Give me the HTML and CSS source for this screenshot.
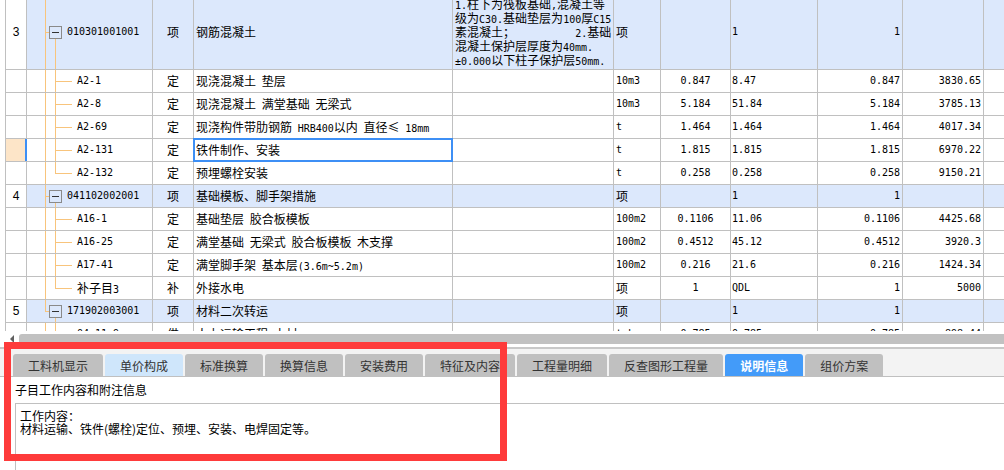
FILE: index.html
```html
<!DOCTYPE html>
<html lang="zh-CN">
    <head>
        <meta charset="UTF-8">
        <title>分部分项工程 - 说明信息</title>
        <link rel="stylesheet" href="styles.css">
    </head>
    <body>
        <div class="grid">
            <div class="rows">
                <div class="row bill tall">
                    <div class="no">3</div>
                    <div class="code head"><i class="fold"></i><span class="n">010301001001</span></div>
                    <div class="type">项</div>
                    <div class="name">钢筋混凝土</div>
                    <div class="feat"><p><span class="n">1.</span>柱下为筏板基础<span class="n">,</span>混凝土等<br>级为<span class="n">C30.</span>基础垫层为<span class="n">100</span>厚<span class="n">C15</span><br>素混凝土；<span class="n">          2.</span>基础<br>混凝土保护层厚度为<span class="n">40mm.</span><br><span class="n">±0.000</span>以下柱子保护层<span class="n">50mm.</span></p></div>
                    <div class="unit">项</div>
                    <div class="hl n"></div>
                    <div class="expr n">1</div>
                    <div class="qty n">1</div>
                    <div class="price n"></div>
                    <div></div>
                </div>
                <div class="row">
                    <div class="no"></div>
                    <div class="code kid n">A2-1</div>
                    <div class="type">定</div>
                    <div class="name">现浇混凝土 垫层</div>
                    <div class="feat"></div>
                    <div class="unit n">10m3</div>
                    <div class="hl n">0.847</div>
                    <div class="expr n">8.47</div>
                    <div class="qty n">0.847</div>
                    <div class="price n">3830.65</div>
                    <div></div>
                </div>
                <div class="row">
                    <div class="no"></div>
                    <div class="code kid n">A2-8</div>
                    <div class="type">定</div>
                    <div class="name">现浇混凝土 满堂基础 无梁式</div>
                    <div class="feat"></div>
                    <div class="unit n">10m3</div>
                    <div class="hl n">5.184</div>
                    <div class="expr n">51.84</div>
                    <div class="qty n">5.184</div>
                    <div class="price n">3785.13</div>
                    <div></div>
                </div>
                <div class="row">
                    <div class="no"></div>
                    <div class="code kid n">A2-69</div>
                    <div class="type">定</div>
                    <div class="name"><p>现浇构件带肋钢筋 <span class="n">HRB400</span>以内 直径≤ <span class="n">18mm</span></p></div>
                    <div class="feat"></div>
                    <div class="unit n">t</div>
                    <div class="hl n">1.464</div>
                    <div class="expr n">1.464</div>
                    <div class="qty n">1.464</div>
                    <div class="price n">4017.34</div>
                    <div></div>
                </div>
                <div class="row">
                    <div class="no cur"></div>
                    <div class="code kid n">A2-131</div>
                    <div class="type">定</div>
                    <div class="name sel">铁件制作、安装</div>
                    <div class="feat"></div>
                    <div class="unit n">t</div>
                    <div class="hl n">1.815</div>
                    <div class="expr n">1.815</div>
                    <div class="qty n">1.815</div>
                    <div class="price n">6970.22</div>
                    <div></div>
                </div>
                <div class="row">
                    <div class="no"></div>
                    <div class="code kid last n">A2-132</div>
                    <div class="type">定</div>
                    <div class="name">预埋螺栓安装</div>
                    <div class="feat"></div>
                    <div class="unit n">t</div>
                    <div class="hl n">0.258</div>
                    <div class="expr n">0.258</div>
                    <div class="qty n">0.258</div>
                    <div class="price n">9150.21</div>
                    <div></div>
                </div>
                <div class="row bill">
                    <div class="no">4</div>
                    <div class="code head"><i class="fold"></i><span class="n">041102002001</span></div>
                    <div class="type">项</div>
                    <div class="name">基础模板、脚手架措施</div>
                    <div class="feat"></div>
                    <div class="unit">项</div>
                    <div class="hl n"></div>
                    <div class="expr n">1</div>
                    <div class="qty n">1</div>
                    <div class="price n"></div>
                    <div></div>
                </div>
                <div class="row">
                    <div class="no"></div>
                    <div class="code kid n">A16-1</div>
                    <div class="type">定</div>
                    <div class="name">基础垫层 胶合板模板</div>
                    <div class="feat"></div>
                    <div class="unit n">100m2</div>
                    <div class="hl n">0.1106</div>
                    <div class="expr n">11.06</div>
                    <div class="qty n">0.1106</div>
                    <div class="price n">4425.68</div>
                    <div></div>
                </div>
                <div class="row">
                    <div class="no"></div>
                    <div class="code kid n">A16-25</div>
                    <div class="type">定</div>
                    <div class="name">满堂基础 无梁式 胶合板模板 木支撑</div>
                    <div class="feat"></div>
                    <div class="unit n">100m2</div>
                    <div class="hl n">0.4512</div>
                    <div class="expr n">45.12</div>
                    <div class="qty n">0.4512</div>
                    <div class="price n">3920.3</div>
                    <div></div>
                </div>
                <div class="row">
                    <div class="no"></div>
                    <div class="code kid n">A17-41</div>
                    <div class="type">定</div>
                    <div class="name"><p>满堂脚手架 基本层<span class="n">(3.6m~5.2m)</span></p></div>
                    <div class="feat"></div>
                    <div class="unit n">100m2</div>
                    <div class="hl n">0.216</div>
                    <div class="expr n">21.6</div>
                    <div class="qty n">0.216</div>
                    <div class="price n">1424.34</div>
                    <div></div>
                </div>
                <div class="row">
                    <div class="no"></div>
                    <div class="code kid last"><p>补子目<span class="n">3</span></p></div>
                    <div class="type">补</div>
                    <div class="name">外接水电</div>
                    <div class="feat"></div>
                    <div class="unit">项</div>
                    <div class="hl n">1</div>
                    <div class="expr n">QDL</div>
                    <div class="qty n">1</div>
                    <div class="price n">5000</div>
                    <div></div>
                </div>
                <div class="row bill">
                    <div class="no">5</div>
                    <div class="code head end"><i class="fold"></i><span class="n">171902003001</span></div>
                    <div class="type">项</div>
                    <div class="name">材料二次转运</div>
                    <div class="feat"></div>
                    <div class="unit">项</div>
                    <div class="hl n"></div>
                    <div class="expr n">1</div>
                    <div class="qty n">1</div>
                    <div class="price n"></div>
                    <div></div>
                </div>
                <div class="row">
                    <div class="no"></div>
                    <div class="code kid n">04-11-9</div>
                    <div class="type">借</div>
                    <div class="name">人力运输工程 木材</div>
                    <div class="feat"></div>
                    <div class="unit n">t.km</div>
                    <div class="hl n">0.785</div>
                    <div class="expr n">0.785</div>
                    <div class="qty n">0.785</div>
                    <div class="price n">898.44</div>
                    <div></div>
                </div>
            </div>
        </div>

        <div class="hscroll">
            <i class="arrow"></i>
            <div class="thumb"></div>
        </div>

        <div class="tabs">
            <div class="tab">工料机显示</div>
            <div class="tab soft">单价构成</div>
            <div class="tab">标准换算</div>
            <div class="tab">换算信息</div>
            <div class="tab">安装费用</div>
            <div class="tab">特征及内容</div>
            <div class="tab">工程量明细</div>
            <div class="tab">反查图形工程量</div>
            <div class="tab on">说明信息</div>
            <div class="tab">组价方案</div>
        </div>

        <div class="note-title">子目工作内容和附注信息</div>
        <div class="note">
            工作内容：<br>
            材料运输、铁件(螺栓)定位、预埋、安装、电焊固定等。
        </div>

        <div class="mark"></div>
    </body>
</html>
```
FILE: styles.css
```css
/* 清单编辑表格 + 下方属性页签 */

body{
    margin: 0;
    width: 1004px;
    height: 470px;
    overflow: hidden;
    position: relative;
    background-color: #fff;
    color: #000;
    font-family: "Noto Sans CJK SC", sans-serif;
    font-size: 12px;
}

p{
    margin: 0;
}

/* ---------- 表格 ---------- */

.grid{
    height: 331px;
    overflow: hidden;
}

.rows{
    margin: -5px 0 0 5px;
    border-left: 1px solid #c0c0c0;
}

.row{
    display: grid;
    grid-template-columns: 21px 126px 41px 259px 161px 47px 70px 87px 85px 81px 1fr;
    height: 23px;
    box-sizing: border-box;
    border-bottom: 1px solid #c0c0c0;
}

.row.tall{
    height: 75px;
}

.row > div{
    display: flex;
    align-items: center;
    border-right: 1px solid #c0c0c0;
    line-height: 14px;
    white-space: nowrap;
    overflow: hidden;
    word-spacing: 3px;
}

.row > div:last-child{
    border-right: 0;
}

.bill{
    background-color: #dce8fc;
}

.n{
    font-family: "DejaVu Sans Mono", monospace;
    font-size: 10px;
    line-height: 10px;
    word-spacing: 0;
    white-space: pre;
}

.row > .no{
    justify-content: center;
    background-color: #fff;
    font-family: "Liberation Sans", sans-serif;
    font-size: 12px;
}

.row > .cur{
    background-color: #fde5c8;
    border-right-color: #3d8ff5;
    box-shadow: inset -1px 0 #3d8ff5;
}

.row > .type, .row > .hl{
    justify-content: center;
}

.row > .name, .row > .feat, .row > .unit{
    padding-left: 2px;
}

.row > .expr{
    padding-left: 1px;
}

.row > .qty, .row > .price{
    justify-content: flex-end;
    padding-right: 2px;
}

/* 当前选中单元格 */
.row > .sel{
    position: relative;
    overflow: visible;
}

.sel::after{
    content: "";
    position: absolute;
    left: -1px;
    top: -1px;
    right: -1px;
    bottom: -1px;
    border: 2px solid #3d8ff5;
}

/* 树形连线 */
.code{
    background-repeat: no-repeat;
    background-image:
        linear-gradient(#f8c47c, #f8c47c),
        linear-gradient(#f8c47c, #f8c47c),
        linear-gradient(#f8c47c, #f8c47c);
}

.row > .kid{
    padding-left: 50px;
    background-position: 18px 0, 28px 0, 28px 50%;
    background-size: 1px 100%, 1px 100%, 17px 1px;
}

.row > .kid.last{
    background-size: 1px 100%, 1px 50%, 17px 1px;
}

.row > .head{
    padding-left: 22px;
    background-position: 18px 0, 28px 100%, 18px 50%;
    background-size: 1px 100%, 1px calc(50% - 6px), 4px 1px;
}

.row > .head.end{
    background-size: 1px 50%, 1px calc(50% - 6px), 4px 1px;
}

.fold{
    position: relative;
    flex: none;
    width: 11px;
    height: 11px;
    border: 1px solid #8a8a8a;
    margin-right: 5px;
}

.fold::after{
    content: "";
    position: absolute;
    left: 2px;
    right: 2px;
    top: 5px;
    height: 1px;
    background-color: #333;
}

/* ---------- 横向滚动条 ---------- */

.hscroll{
    height: 16px;
    border-bottom: 2px solid #c8c8c8;
    display: flex;
    align-items: center;
    padding-left: 10px;
}

.arrow{
    width: 0;
    height: 0;
    border-right: 4px solid #606060;
    border-top: 4px solid transparent;
    border-bottom: 4px solid transparent;
    margin-right: 5px;
}

.thumb{
    flex: 1;
    height: 10px;
    background-color: #c1c1c1;
    border-radius: 3px 0 0 3px;
}

/* ---------- 页签 ---------- */

.tabs{
    display: flex;
    gap: 2px;
    height: 28px;
    box-sizing: border-box;
    padding: 5px 0 0 13px;
    background-color: #f3f3f3;
    border-bottom: 1px solid #c0c0c0;
}

.tab{
    padding: 0 15px;
    line-height: 23px;
    background-color: #c0c0c0;
    border-radius: 3px 3px 0 0;
    color: #333;
    white-space: nowrap;
}

.tab.soft{
    background-color: #cfe6fb;
}

.tab.on{
    background-color: #439bf9;
    color: #fff;
    font-weight: bold;
}

.note-title{
    height: 26px;
    line-height: 26px;
    padding-left: 15px;
}

.note{
    margin-left: 15px;
    height: 70px;
    padding: 5px 4px;
    line-height: 13px;
    border-top: 1px solid #c0c0c0;
    border-left: 1px solid #c0c0c0;
}

/* 截图上的红色标注框 */
.mark{
    position: absolute;
    left: 4px;
    top: 342px;
    width: 503px;
    height: 119px;
    box-sizing: border-box;
    border: 7px solid #fe3b3b;
}
```
